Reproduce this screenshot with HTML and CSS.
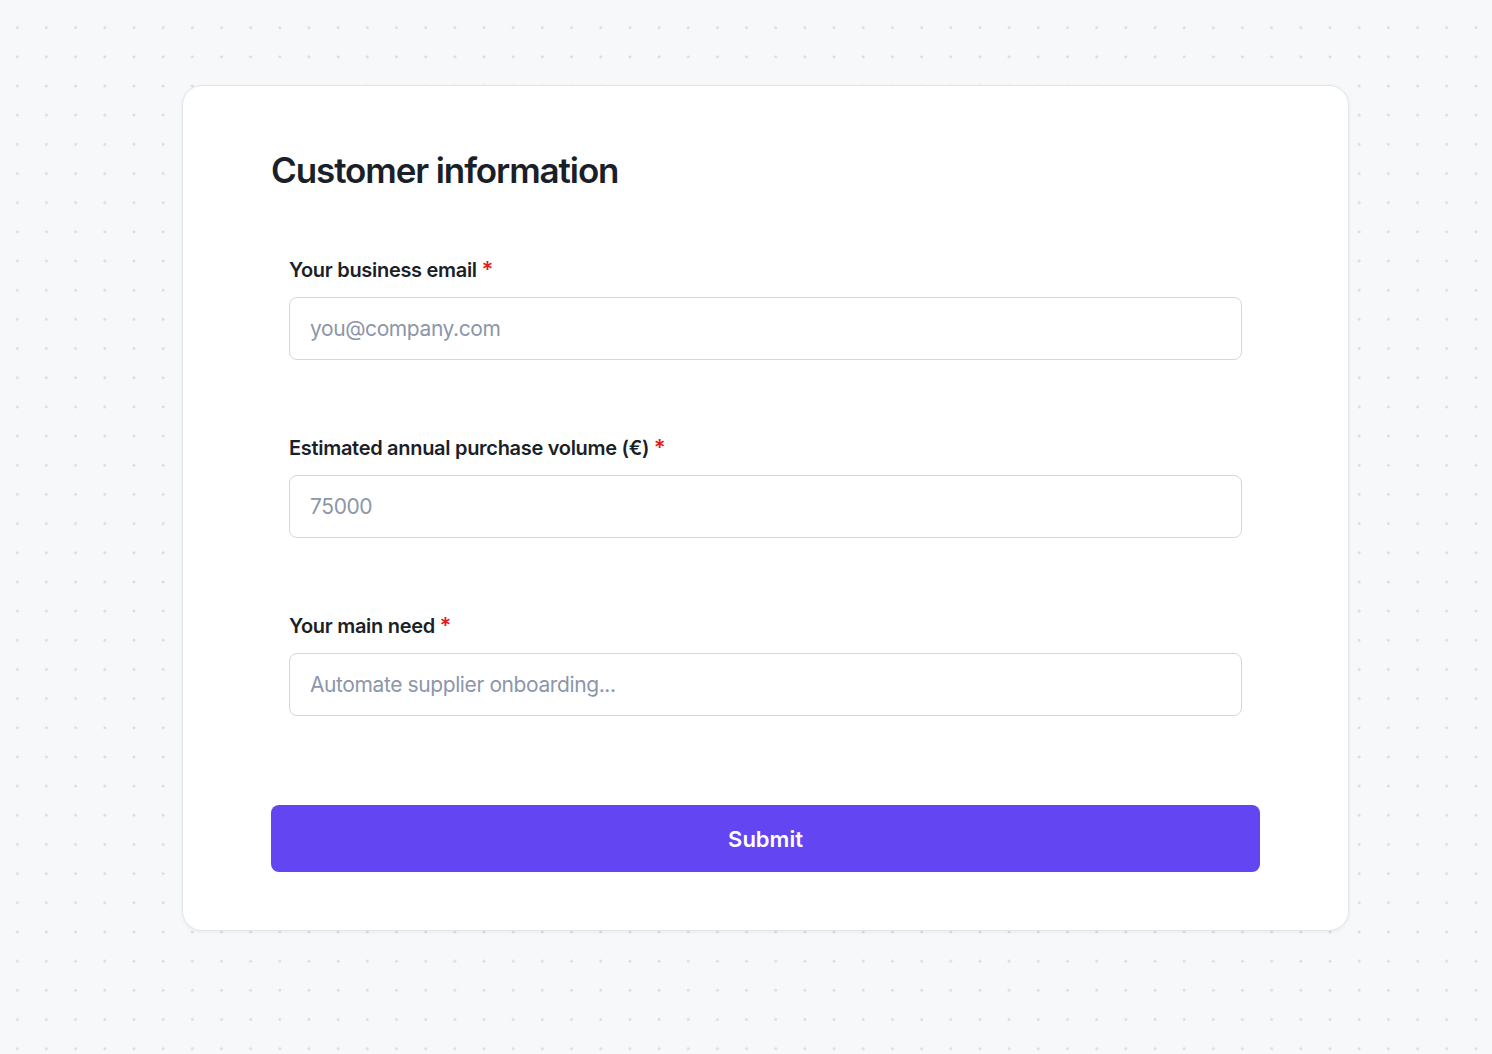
FILE: index.html
```html
<!DOCTYPE html>
<html>

<head>
    <link rel="stylesheet" href="styles.css">
</head>

<body>
    <div class="card">
        <h2 class="title">Customer information</h2>
        <form id="customerForm">
            <div class="fields">
                <div class="form-group">
                    <label for="email">Your business email <span class="req">*</span></label>
                    <input type="email" id="email" placeholder="you@company.com" required>
                </div>
                <div class="form-group">
                    <label for="volume">Estimated annual purchase volume (€) <span class="req">*</span></label>
                    <input type="text" id="volume" placeholder="75000" required>
                </div>
                <div class="form-group">
                    <label for="need">Your main need <span class="req">*</span></label>
                    <input type="text" id="need" placeholder="Automate supplier onboarding..." required>
                </div>
            </div>
            <button type="button" class="btn">Submit</button>
        </form>
    </div>
</body>

</html>
```

FILE: styles.css
```css
html,
body {
    margin: 0;
    min-height: 100%;
}

body {
    font-family: Inter, "Noto Sans", Arial, sans-serif;
    color: #1b1f29;
    background-color: #f7f8fa;
    background-image: radial-gradient(circle, #d8dbe2 1.2px, transparent 1.7px);
    background-size: 29.18px 29.18px;
    background-position: 2.7px 13.1px;
    height: 1054px;
    overflow: hidden;
}

.card {
    box-sizing: border-box;
    width: 1167px;
    margin: 85px 0 0 182px;
    padding: 63px 88px 58px;
    background-color: #fff;
    border: 1px solid #e3e5ee;
    border-radius: 20px;
    box-shadow: 0 1px 4px rgba(20, 24, 40, 0.06);
}

.title {
    margin: 0 0 65px;
    font-size: 35px;
    line-height: 42px;
    font-weight: 600;
    letter-spacing: -1.1px;
}

.fields {
    padding: 0 18px;
}

.form-group {
    margin-bottom: 74px;
}

.form-group:last-child {
    margin-bottom: 89px;
}

label {
    display: block;
    margin-bottom: 13px;
    font-size: 20px;
    line-height: 28px;
    font-weight: 600;
    letter-spacing: -0.3px;
}

.req {
    color: #e11d1d;
    font-size: 22px;
    line-height: 0;
}

input {
    box-sizing: border-box;
    display: block;
    width: 100%;
    height: 63px;
    padding: 0 20px;
    font-family: inherit;
    font-size: 21px;
    letter-spacing: -0.4px;
    color: #1b1f29;
    background: #fff;
    border: 1.5px solid #d1d8e5;
    border-radius: 8px;
    outline: none;
}

input::placeholder {
    color: #8c96aa;
}

.btn {
    display: block;
    width: 100%;
    height: 67px;
    font-family: inherit;
    font-size: 22px;
    font-weight: 600;
    color: #fff;
    background-color: #6345f2;
    border: none;
    border-radius: 8px;
    cursor: pointer;
}
```
